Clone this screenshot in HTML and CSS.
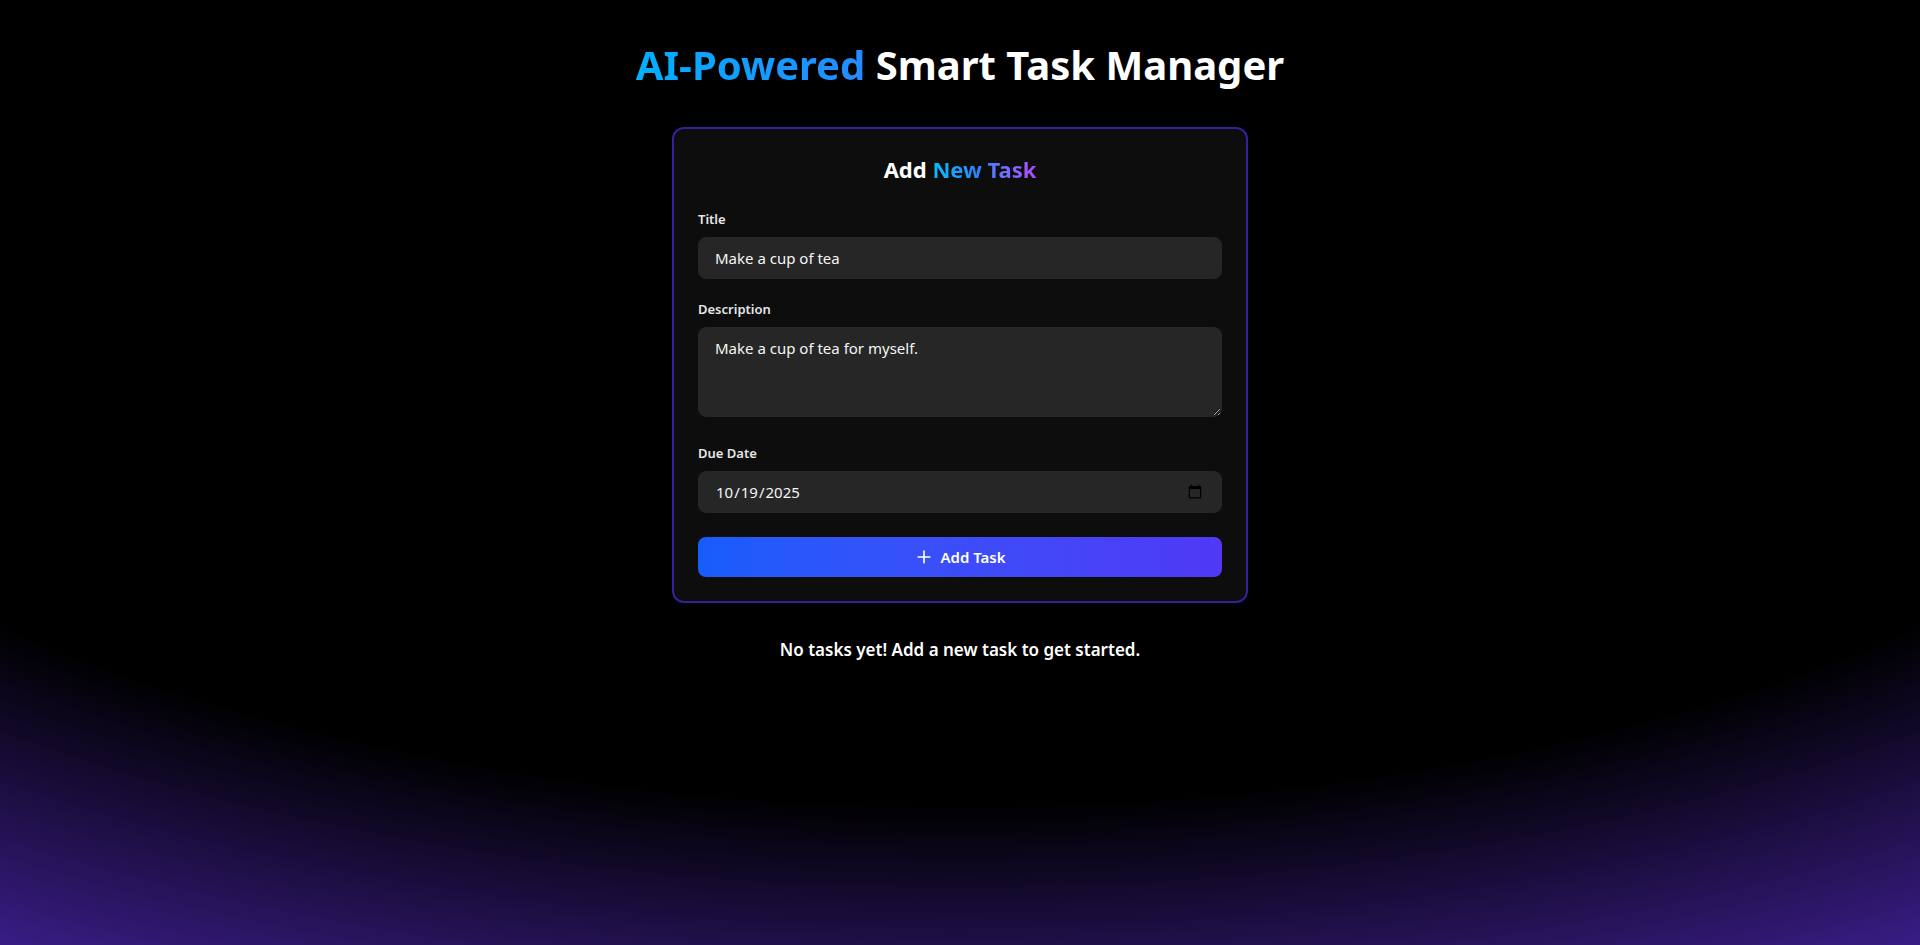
FILE: index.html
```html
<!DOCTYPE html>
<html lang="en">
<head>
  <meta charset="utf-8">
  <meta name="viewport" content="width=device-width, initial-scale=1">
  <title>AI-Powered Smart Task Manager</title>
  <link rel="stylesheet" href="styles.css">
</head>
<body>
  <main class="page">
    <h1 class="page-title"><span class="title-accent">AI-Powered</span> Smart Task Manager</h1>
    <form class="card">
      <h2 class="card-title">Add <span class="card-accent">New Task</span></h2>
      <div class="field">
        <label class="label" for="title">Title</label>
        <input class="control" id="title" type="text" value="Make a cup of tea">
      </div>
      <div class="field field-area">
        <label class="label" for="description">Description</label>
        <textarea class="control" id="description" rows="3">Make a cup of tea for myself.</textarea>
      </div>
      <div class="field">
        <label class="label" for="due">Due Date</label>
        <input class="control" id="due" type="date" value="2025-10-19">
      </div>
      <button class="submit" type="button">
        <svg class="submit-icon" viewBox="0 0 24 24" aria-hidden="true"><path d="M12 5v14M5 12h14"/></svg>
        Add Task
      </button>
    </form>
    <p class="empty">No tasks yet! Add a new task to get started.</p>
  </main>
</body>
</html>
```
FILE: styles.css
```css
*, *::before, *::after {
  box-sizing: border-box;
}

body {
  margin: 0;
  color: #fff;
  font-family: "Segoe UI", "Noto Sans", "Open Sans", sans-serif;
  font-size: 15px;
  line-height: 24px;
}

.page {
  display: flex;
  flex-direction: column;
  align-items: center;
  min-height: 100vh;
  padding: 40px 16px;
  background: radial-gradient(125% 125% at 50% 10%, #000 60%, #63e 100%);
}

.page-title {
  margin: 0 0 37px;
  font-size: 40px;
  font-weight: 700;
  line-height: 50px;
  text-align: center;
}

.title-accent,
.card-accent {
  color: transparent;
  background-clip: text;
  -webkit-background-clip: text;
}

.title-accent {
  background-image: linear-gradient(to right, #00b0ff, #268aff);
}

.card-accent {
  background-image: linear-gradient(in oklab to right, #00bcff, #2b7fff, #ad46ff);
}

.card {
  display: flex;
  flex-direction: column;
  width: 100%;
  max-width: 576px;
  padding: 24px;
  border: 2px solid #371f9e;
  border-radius: 12px;
  background: #0d0d0d;
}

.card-title {
  margin: 0 0 24px;
  font-size: 22px;
  font-weight: 700;
  line-height: 32px;
  text-align: center;
}

.field {
  display: flex;
  flex-direction: column;
  gap: 8px;
  margin-bottom: 20px;
}

.field-area {
  margin-bottom: 26px;
}

.label {
  color: #e5e5e5;
  font-size: 13px;
  font-weight: 600;
  line-height: 20px;
}

.control {
  display: block;
  width: 100%;
  margin: 0;
  padding: 8px 16px;
  border: 1px solid #262626;
  border-radius: 8px;
  outline: none;
  background: #262626;
  color: #f5f5f5;
  font: inherit;
}

input.control {
  height: 42px;
}

textarea.control {
  resize: vertical;
}

.control::-webkit-calendar-picker-indicator {
  font-size: 16px;
}

.submit {
  display: flex;
  align-items: center;
  justify-content: center;
  gap: 6px;
  margin-top: 4px;
  padding: 8px 16px;
  border: 0;
  border-radius: 8px;
  background: linear-gradient(in oklab to right, #155dfc, #4f39f6);
  color: #fff;
  font: inherit;
  font-weight: 600;
  cursor: pointer;
}

.submit-icon {
  width: 20px;
  height: 20px;
  fill: none;
  stroke: currentColor;
  stroke-width: 2;
  stroke-linecap: round;
}

.empty {
  margin: 32px 0 0;
  font-size: 17px;
  font-weight: 600;
  line-height: 30px;
  text-align: center;
}
```
